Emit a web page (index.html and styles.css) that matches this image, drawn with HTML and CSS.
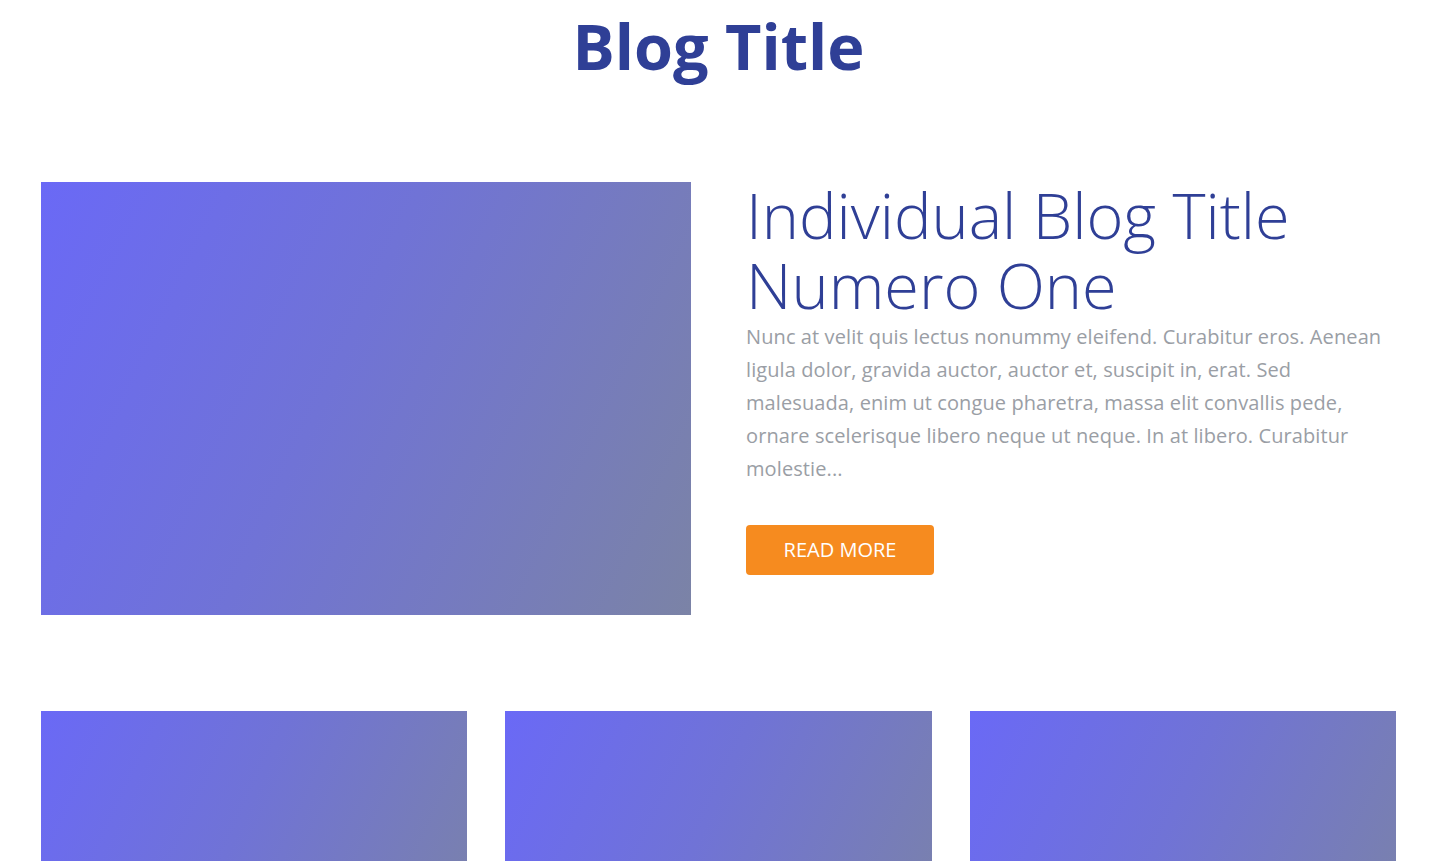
FILE: index.html
```html
<!DOCTYPE html>
<html lang="en">
<head>
<meta charset="utf-8">
<title>Blog Title</title>
<link rel="stylesheet" href="styles.css">
</head>
<body>
<header class="page-header">
  <h1 class="page-title">Blog Title</h1>
</header>
<main class="content">
  <article class="featured">
    <div class="featured-image"></div>
    <div class="featured-body">
      <h2 class="featured-title">Individual Blog Title Numero One</h2>
      <p class="featured-excerpt">Nunc at velit quis lectus nonummy eleifend. Curabitur eros. Aenean ligula dolor, gravida auctor, auctor et, suscipit in, erat. Sed malesuada, enim ut congue pharetra, massa elit convallis pede, ornare scelerisque libero neque ut neque. In at libero. Curabitur molestie...</p>
      <a class="btn-read" href="#">READ MORE</a>
    </div>
  </article>
  <section class="cards">
    <div class="card"><div class="card-image"></div></div>
    <div class="card"><div class="card-image"></div></div>
    <div class="card"><div class="card-image"></div></div>
  </section>
</main>
</body>
</html>
```
FILE: styles.css
```css
html, body {
  margin: 0;
  padding: 0;
  background: #ffffff;
}
body {
  font-family: "Open Sans", "Noto Sans", sans-serif;
}
.page-header {
  text-align: center;
  padding-top: 8px;
}
.page-title {
  margin: 0;
  font-size: 63px;
  line-height: 76px;
  font-weight: 700;
  color: #2f3f96;
}
.content {
  padding: 0 41px;
}
.featured {
  display: flex;
  gap: 55px;
  margin-top: 98px;
}
.featured-image {
  flex: 0 0 650px;
  height: 433px;
  background: linear-gradient(115deg, #6a69f6 0%, #7073d6 45%, #7b83a6 100%);
}
.featured-body {
  flex: 1;
  min-width: 0;
}
.featured-title {
  margin: -2px 0 0;
  font-size: 63px;
  line-height: 70px;
  font-weight: 300;
  color: #2f3f96;
}
.featured-excerpt {
  margin: 0;
  font-size: 20px;
  line-height: 33px;
  letter-spacing: 0.1px;
  color: #9a9ea5;
}
.btn-read {
  display: inline-block;
  margin-top: 40px;
  width: 188px;
  height: 50px;
  line-height: 50px;
  text-align: center;
  background: #f68b1f;
  color: #ffffff;
  border-radius: 4px;
  font-size: 20px;
  font-weight: 500;
  text-decoration: none;
}
.cards {
  display: grid;
  grid-template-columns: repeat(3, 1fr);
  gap: 38px;
  margin-top: 96px;
}
.card-image {
  height: 285px;
  background: linear-gradient(115deg, #6a69f6 0%, #7073d6 45%, #7b83a6 100%);
}
```
